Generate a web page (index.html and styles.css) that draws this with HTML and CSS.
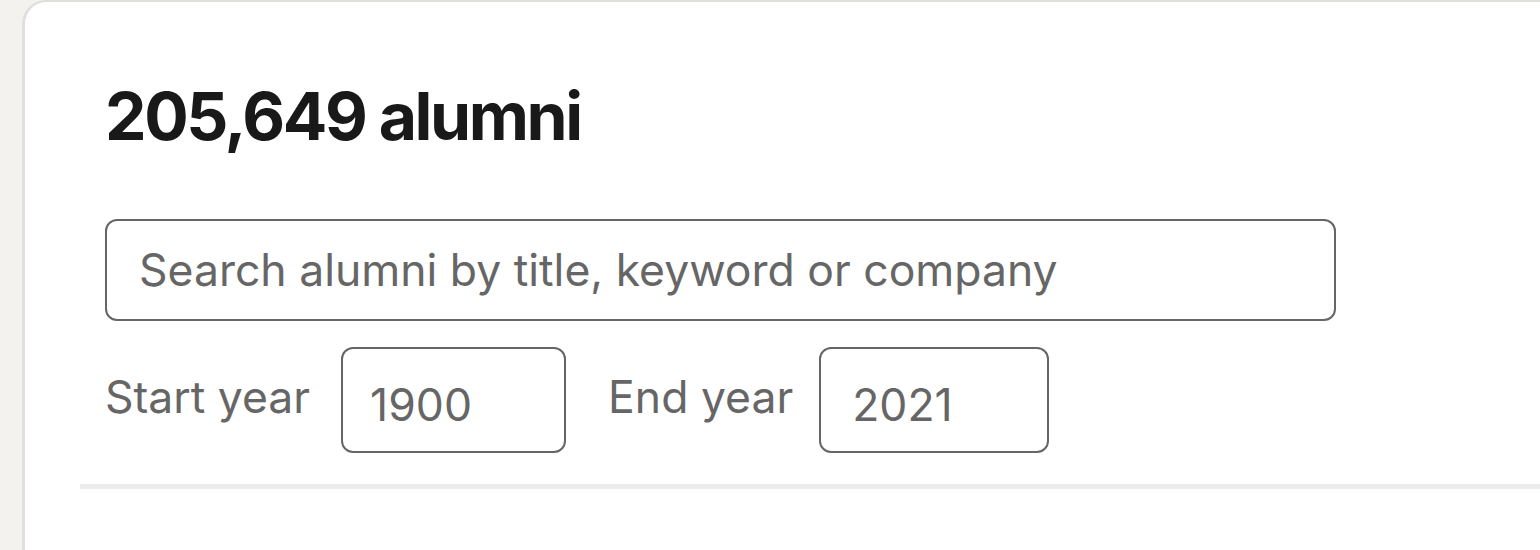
FILE: index.html
```html
<!DOCTYPE html>
<html lang="en">
<head>
<meta charset="utf-8">
<title>Alumni</title>
<link rel="stylesheet" href="styles.css">
</head>
<body>
<main class="card">
  <section class="filters">
    <h2 class="count">205,649 alumni</h2>
    <input class="search" type="text" placeholder="Search alumni by title, keyword or company">
    <div class="years">
      <label class="year-label start" for="start">Start year</label>
      <input class="year-input start-input" id="start" type="text" value="1900">
      <label class="year-label end" for="end">End year</label>
      <input class="year-input end-input" id="end" type="text" value="2021">
    </div>
  </section>
  <hr class="divider">
</main>
</body>
</html>
```
FILE: styles.css
```css
html, body {
  margin: 0;
  height: 100%;
  overflow: hidden;
}
body {
  background: #f3f2ef;
  font-family: Inter, "Liberation Sans", sans-serif;
}
.card {
  margin-left: 22px;
  height: 100%;
  background: #fff;
  border-left: 3px solid #e0dfdc;
  border-top: 2px solid #e0dfdc;
  border-top-left-radius: 24px;
  box-sizing: border-box;
}
.filters {
  padding: 74px 0 0 80px;
}
.count {
  margin: 0;
  font-size: 66px;
  line-height: 80px;
  font-weight: 700;
  letter-spacing: -2.4px;
  color: #191919;
}
.search {
  display: block;
  box-sizing: border-box;
  margin-top: 63px;
  width: 1231px;
  height: 102px;
  border: 2px solid #666;
  border-radius: 12px;
  padding: 0 32px;
  font-family: inherit;
  font-size: 44.5px;
  color: #666;
  outline: none;
}
.search::placeholder {
  color: #666;
}
.years {
  display: flex;
  align-items: center;
  margin-top: 26px;
}
.year-label {
  font-size: 44.5px;
  line-height: 54px;
  color: #666;
  margin-bottom: 6px;
}
.year-label.start {
  margin-right: 31px;
}
.year-label.end {
  margin-left: 42px;
  margin-right: 26px;
}
.year-input {
  box-sizing: border-box;
  height: 106px;
  border: 2px solid #666;
  border-radius: 12px;
  padding: 10px 27px 0;
  font-family: inherit;
  font-size: 44.5px;
  color: #666;
  outline: none;
}
.start-input {
  width: 225px;
}
.end-input {
  width: 230px;
  padding-left: 31px;
}
.divider {
  margin: 31px 0 0 55px;
  border: none;
  height: 5px;
  background: #ebebeb;
}
```
